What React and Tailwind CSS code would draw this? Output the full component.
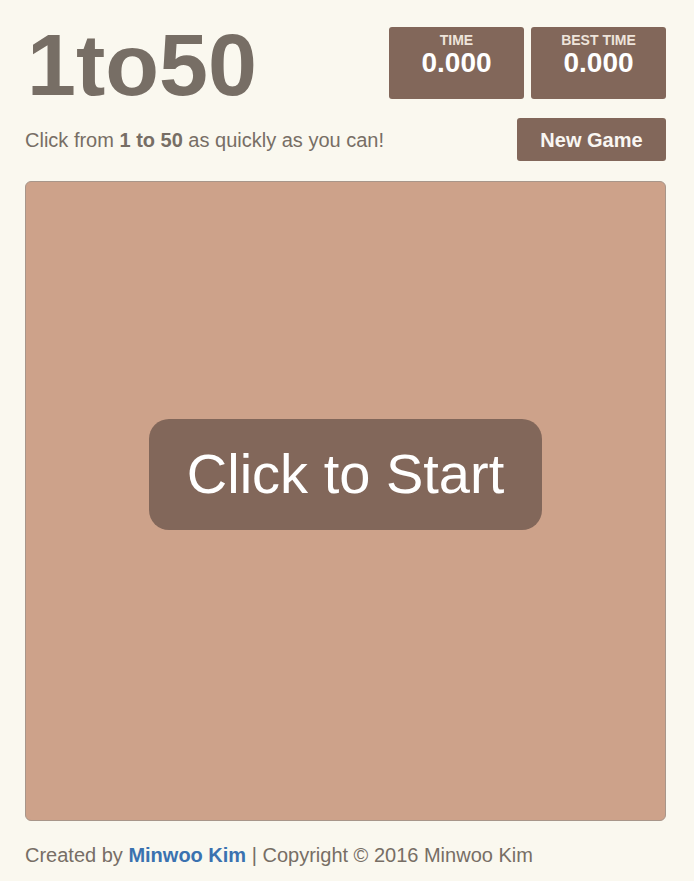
export default function App() {
  return (
    <div className="min-h-[881px] bg-[#faf8ef] font-['Liberation_Sans',Arial,sans-serif] text-[#776e65]">
      <div className="ml-[25px] w-[641px] pt-[27px]">
        <div className="flex items-start justify-between">
          <h1 className="ml-[2px] mt-[2px] text-[88px] font-bold leading-[72px] text-[#776e65]">1to50</h1>
          <div className="flex gap-[7px]">
            <ScoreBox label="TIME" value="0.000" />
            <ScoreBox label="BEST TIME" value="0.000" />
          </div>
        </div>
        <div className="mt-[17px] flex items-center justify-between">
          <p className="text-[20px]">
            Click from <b>1 to 50</b> as quickly as you can!
          </p>
          <button className="h-[43px] w-[149px] rounded-[3px] bg-[#82675a] text-[20px] font-bold text-[#f9f6f2]">
            New Game
          </button>
        </div>
        <div className="mt-[20px] flex h-[640px] items-center justify-center rounded-[6px] border border-[#a8968a] bg-[#cda28a]">
          <button className="mb-[54px] h-[111px] w-[393px] rounded-[20px] bg-[#82675a] text-[56px] leading-none text-white">
            Click to Start
          </button>
        </div>
        <p className="mt-[19px] text-[20px]">
          Created by <a className="font-bold text-[#3a72b0]">Minwoo Kim</a> | Copyright © 2016 Minwoo Kim
        </p>
      </div>
    </div>
  )
}

const ScoreBox = ({ label, value }) => (
  <div className="flex h-[72px] w-[135px] flex-col items-center rounded-[3px] bg-[#82675a] pt-[6px]">
    <span className="text-[14px] font-semibold leading-[15px] text-[#eee4da]">{label}</span>
    <span className="text-[28px] font-bold leading-[30px] text-white">{value}</span>
  </div>
)
